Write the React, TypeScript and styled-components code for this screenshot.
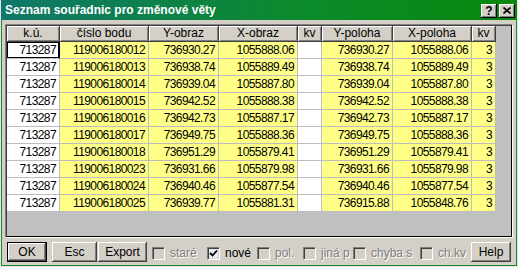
import React from 'react'
import styled, { createGlobalStyle } from 'styled-components'

const YELLOW = '#ffff88'

const columns = [
  { title: 'k.ú.', width: 53, bg: '#ffffff' },
  { title: 'číslo bodu', width: 89, bg: YELLOW },
  { title: 'Y-obraz', width: 70, bg: YELLOW },
  { title: 'X-obraz', width: 79, bg: YELLOW },
  { title: 'kv', width: 24, bg: '#ffffff' },
  { title: 'Y-poloha', width: 71, bg: YELLOW },
  { title: 'X-poloha', width: 79, bg: YELLOW },
  { title: 'kv', width: 24, bg: YELLOW },
]

const rows = [
  ['713287', '119006180012', '736930.27', '1055888.06', '', '736930.27', '1055888.06', '3'],
  ['713287', '119006180013', '736938.74', '1055889.49', '', '736938.74', '1055889.49', '3'],
  ['713287', '119006180014', '736939.04', '1055887.80', '', '736939.04', '1055887.80', '3'],
  ['713287', '119006180015', '736942.52', '1055888.38', '', '736942.52', '1055888.38', '3'],
  ['713287', '119006180016', '736942.73', '1055887.17', '', '736942.73', '1055887.17', '3'],
  ['713287', '119006180017', '736949.75', '1055888.36', '', '736949.75', '1055888.36', '3'],
  ['713287', '119006180018', '736951.29', '1055879.41', '', '736951.29', '1055879.41', '3'],
  ['713287', '119006180023', '736931.66', '1055879.98', '', '736931.66', '1055879.98', '3'],
  ['713287', '119006180024', '736940.46', '1055877.54', '', '736940.46', '1055877.54', '3'],
  ['713287', '119006180025', '736939.77', '1055881.31', '', '736915.88', '1055848.76', '3'],
]

const checks = [
  { label: 'staré', width: 55, checked: false, enabled: false },
  { label: 'nové', width: 50, checked: true, enabled: true },
  { label: 'pol.', width: 46, checked: false, enabled: false },
  { label: 'jiná p', width: 50, checked: false, enabled: false },
  { label: 'chyba s', width: 67, checked: false, enabled: false },
  { label: 'ch.kv', width: 51, checked: false, enabled: false },
]

const App = () => {
  return (
    <>
      <GlobalStyle />
      <Window>
        <TitleBar>
          <Title>Seznam souřadnic pro změnové věty</Title>
          <CaptionButton>?</CaptionButton>
          <CaptionButton>
            <svg width="8" height="7" viewBox="0 0 8 7">
              <path d="M0.5 0.5 L7.5 6.5 M7.5 0.5 L0.5 6.5" stroke="#000" strokeWidth="1.6" />
            </svg>
          </CaptionButton>
        </TitleBar>
        <Body>
          <Grid>
            <GridInner>
              <Row>
                {columns.map((c, i) => (
                  <HeadCell key={i} $w={c.width}>{c.title}</HeadCell>
                ))}
              </Row>
              {rows.map((r, ri) => (
                <Row key={ri}>
                  {r.map((v, ci) => (
                    <Cell key={ci} $w={columns[ci].width} $bg={columns[ci].bg} $focus={ri === 0 && ci === 0}>
                      {v}
                    </Cell>
                  ))}
                </Row>
              ))}
            </GridInner>
          </Grid>
          <Footer>
            <Button $w={40} $default>OK</Button>
            <Button $w={45} $gap={5}>Esc</Button>
            <Button $w={49} $gap={1}>Export</Button>
            <Checks>
              {checks.map((c) => (
                <CheckItem key={c.label} $w={c.width}>
                  <Box $enabled={c.enabled}>
                    {c.checked && (
                      <svg width="9" height="9" viewBox="0 0 9 9">
                        <path d="M1 4 L3.5 6.5 L8 1.5" fill="none" stroke="#000" strokeWidth="1.8" />
                      </svg>
                    )}
                  </Box>
                  <Label $enabled={c.enabled}>{c.label}</Label>
                </CheckItem>
              ))}
            </Checks>
            <Button $w={40}>Help</Button>
          </Footer>
        </Body>
      </Window>
    </>
  )
}

export default App

const GlobalStyle = createGlobalStyle`
  html, body { margin:0; padding:0; background:#d4d0c8; }
  body { font-family:"Liberation Sans", Arial, sans-serif; }
`

const Window = styled.div`
  width:518px;
  height:267px;
  box-sizing:border-box;
  display:flex;
  flex-direction:column;
  background:#d4d0c8;
  border:1px solid #e6e4de;
  border-top:none;
  font-family:"Liberation Sans", Arial, sans-serif;
  font-size:12px;
  color:#000;
`

const TitleBar = styled.div`
  height:20px;
  flex:none;
  display:flex;
  align-items:center;
  gap:2px;
  padding:0 2px 0 4px;
  background:linear-gradient(to right, #10786a 0%, #0b8a2a 60%, #08880c 100%);
`

const Title = styled.div`
  flex:1;
  color:#fff;
  font-weight:bold;
  font-size:12px;
  white-space:nowrap;
`

const CaptionButton = styled.div`
  width:16px;
  height:14px;
  box-sizing:border-box;
  display:flex;
  align-items:center;
  justify-content:center;
  background:#d4d0c8;
  box-shadow:inset -1px -1px #000, inset 1px 1px #fff, inset -2px -2px #808080;
  font-weight:bold;
  font-size:12px;
  line-height:14px;
  margin-top:1px;
`

const Body = styled.div`
  flex:1;
  display:flex;
  flex-direction:column;
  border:1px solid #168a2c;
  border-top:none;
  padding:4px 3px 3px 3px;
`

const Grid = styled.div`
  height:214px;
  flex:none;
  box-sizing:border-box;
  border:1px solid;
  border-color:#808080 #ffffff #ffffff #808080;
`

const GridInner = styled.div`
  height:100%;
  box-sizing:border-box;
  background:#c0c0c0;
  border:1px solid;
  border-color:#404040 #000 #000 #404040;
`

const Row = styled.div`
  display:flex;
`

const HeadCell = styled.div<{ $w: number }>`
  width:${(p) => p.$w}px;
  height:16px;
  flex:none;
  box-sizing:border-box;
  background:#d4d0c8;
  border-right:1px solid #404040;
  border-bottom:1px solid #404040;
  box-shadow:inset 1px 1px #fff, inset -1px -1px #808080;
  text-align:center;
  line-height:15px;
  white-space:nowrap;
`

const Cell = styled.div<{ $w: number; $bg: string; $focus?: boolean }>`
  width:${(p) => p.$w}px;
  height:17px;
  flex:none;
  box-sizing:border-box;
  background:${(p) => p.$bg};
  border-right:1px solid ${(p) => (p.$focus ? '#000040' : '#bdbdbd')};
  border-bottom:1px solid #bdbdbd;
  box-shadow:${(p) => (p.$focus ? 'inset 1px 1px #000, inset -1px -1px #000' : 'none')};
  text-align:right;
  padding-right:3px;
  line-height:16px;
  letter-spacing:-0.6px;
  white-space:nowrap;
  overflow:hidden;
`

const Footer = styled.div`
  display:flex;
  align-items:center;
  height:20px;
  margin-top:4px;
  padding-left:2px;
`

const Button = styled.button<{ $w: number; $gap?: number; $default?: boolean }>`
  width:${(p) => p.$w}px;
  height:20px;
  flex:none;
  box-sizing:border-box;
  margin:0 0 0 ${(p) => p.$gap || 0}px;
  padding:0;
  font-family:"Liberation Sans", Arial, sans-serif;
  font-size:12px;
  color:#000;
  background:#d4d0c8;
  border:${(p) => (p.$default ? '1px solid #000' : 'none')};
  box-shadow:inset -1px -1px #404040, inset 1px 1px #fff, inset -2px -2px #808080;
`

const Checks = styled.div`
  display:flex;
  align-items:center;
  margin-left:5px;
`

const CheckItem = styled.div<{ $w: number }>`
  width:${(p) => p.$w}px;
  display:flex;
  align-items:center;
  gap:5px;
  padding-top:2px;
`

const Box = styled.div<{ $enabled: boolean }>`
  width:13px;
  height:13px;
  flex:none;
  box-sizing:border-box;
  display:flex;
  align-items:center;
  justify-content:center;
  background:${(p) => (p.$enabled ? '#e4eaf4' : '#d4d0c8')};
  border:1px solid;
  border-color:#808080 #fff #fff #808080;
  box-shadow:inset 1px 1px #404040, inset -1px -1px #d4d0c8;
`

const Label = styled.span<{ $enabled: boolean }>`
  white-space:nowrap;
  color:${(p) => (p.$enabled ? '#000' : '#808080')};
  text-shadow:${(p) => (p.$enabled ? 'none' : '1px 1px #fff')};
`
